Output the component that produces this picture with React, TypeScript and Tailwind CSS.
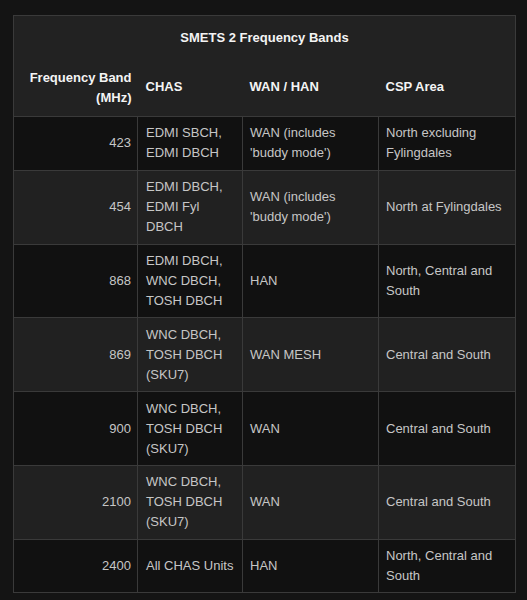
const rows: [string, string[], string[], string[]][] = [
  ['423', ['EDMI SBCH,', 'EDMI DBCH'], ['WAN (includes', "'buddy mode')"], ['North excluding', 'Fylingdales']],
  ['454', ['EDMI DBCH,', 'EDMI Fyl', 'DBCH'], ['WAN (includes', "'buddy mode')"], ['North at Fylingdales']],
  ['868', ['EDMI DBCH,', 'WNC DBCH,', 'TOSH DBCH'], ['HAN'], ['North, Central and', 'South']],
  ['869', ['WNC DBCH,', 'TOSH DBCH', '(SKU7)'], ['WAN MESH'], ['Central and South']],
  ['900', ['WNC DBCH,', 'TOSH DBCH', '(SKU7)'], ['WAN'], ['Central and South']],
  ['2100', ['WNC DBCH,', 'TOSH DBCH', '(SKU7)'], ['WAN'], ['Central and South']],
  ['2400', ['All CHAS Units'], ['HAN'], ['North, Central and', 'South']],
];

function Lines({ items }: { items: string[] }) {
  return (
    <>
      {items.map((t, i) => (
        <div key={i} className="whitespace-nowrap">
          {t}
        </div>
      ))}
    </>
  );
}

export default function App() {
  return (
    <div className="min-h-[600px] bg-[#141414] pl-[13px] pt-[15px] font-['Liberation_Sans',Arial,sans-serif] text-[13px] leading-5">
      <table className="w-[502px] table-fixed border-collapse border border-[#3a3a3a]">
        <colgroup>
          <col className="w-[124px]" />
          <col className="w-[105px]" />
          <col className="w-[136px]" />
          <col className="w-[137px]" />
        </colgroup>
        <thead className="bg-[#222222] font-bold text-[#f4f4f4]">
          <tr>
            <th colSpan={4} className="pt-3 pb-[10px] text-center">
              SMETS 2 Frequency Bands
            </th>
          </tr>
          <tr>
            <th className="pt-[10px] pb-2 pr-[6px] pl-2 text-right align-middle">
              <div>Frequency Band</div>
              <div>(MHz)</div>
            </th>
            <th className="px-2 text-left align-middle">CHAS</th>
            <th className="px-[7px] text-left align-middle">WAN / HAN</th>
            <th className="px-[7px] text-left align-middle">CSP Area</th>
          </tr>
        </thead>
        <tbody className="text-[#c6c6c6]">
          {rows.map(([band, chas, wan, csp], i) => (
            <tr key={band} className={i % 2 === 0 ? 'bg-[#111111]' : 'bg-[#212121]'}>
              <td className="border border-[#3a3a3a] py-[6.4px] pr-[6px] text-right align-middle">{band}</td>
              <td className="border border-[#3a3a3a] py-[6.4px] px-2 align-middle">
                <Lines items={chas} />
              </td>
              <td className="border border-[#3a3a3a] py-[6.4px] px-[7px] align-middle">
                <Lines items={wan} />
              </td>
              <td className="border border-[#3a3a3a] py-[6.4px] px-[7px] align-middle">
                <Lines items={csp} />
              </td>
            </tr>
          ))}
        </tbody>
      </table>
    </div>
  );
}
